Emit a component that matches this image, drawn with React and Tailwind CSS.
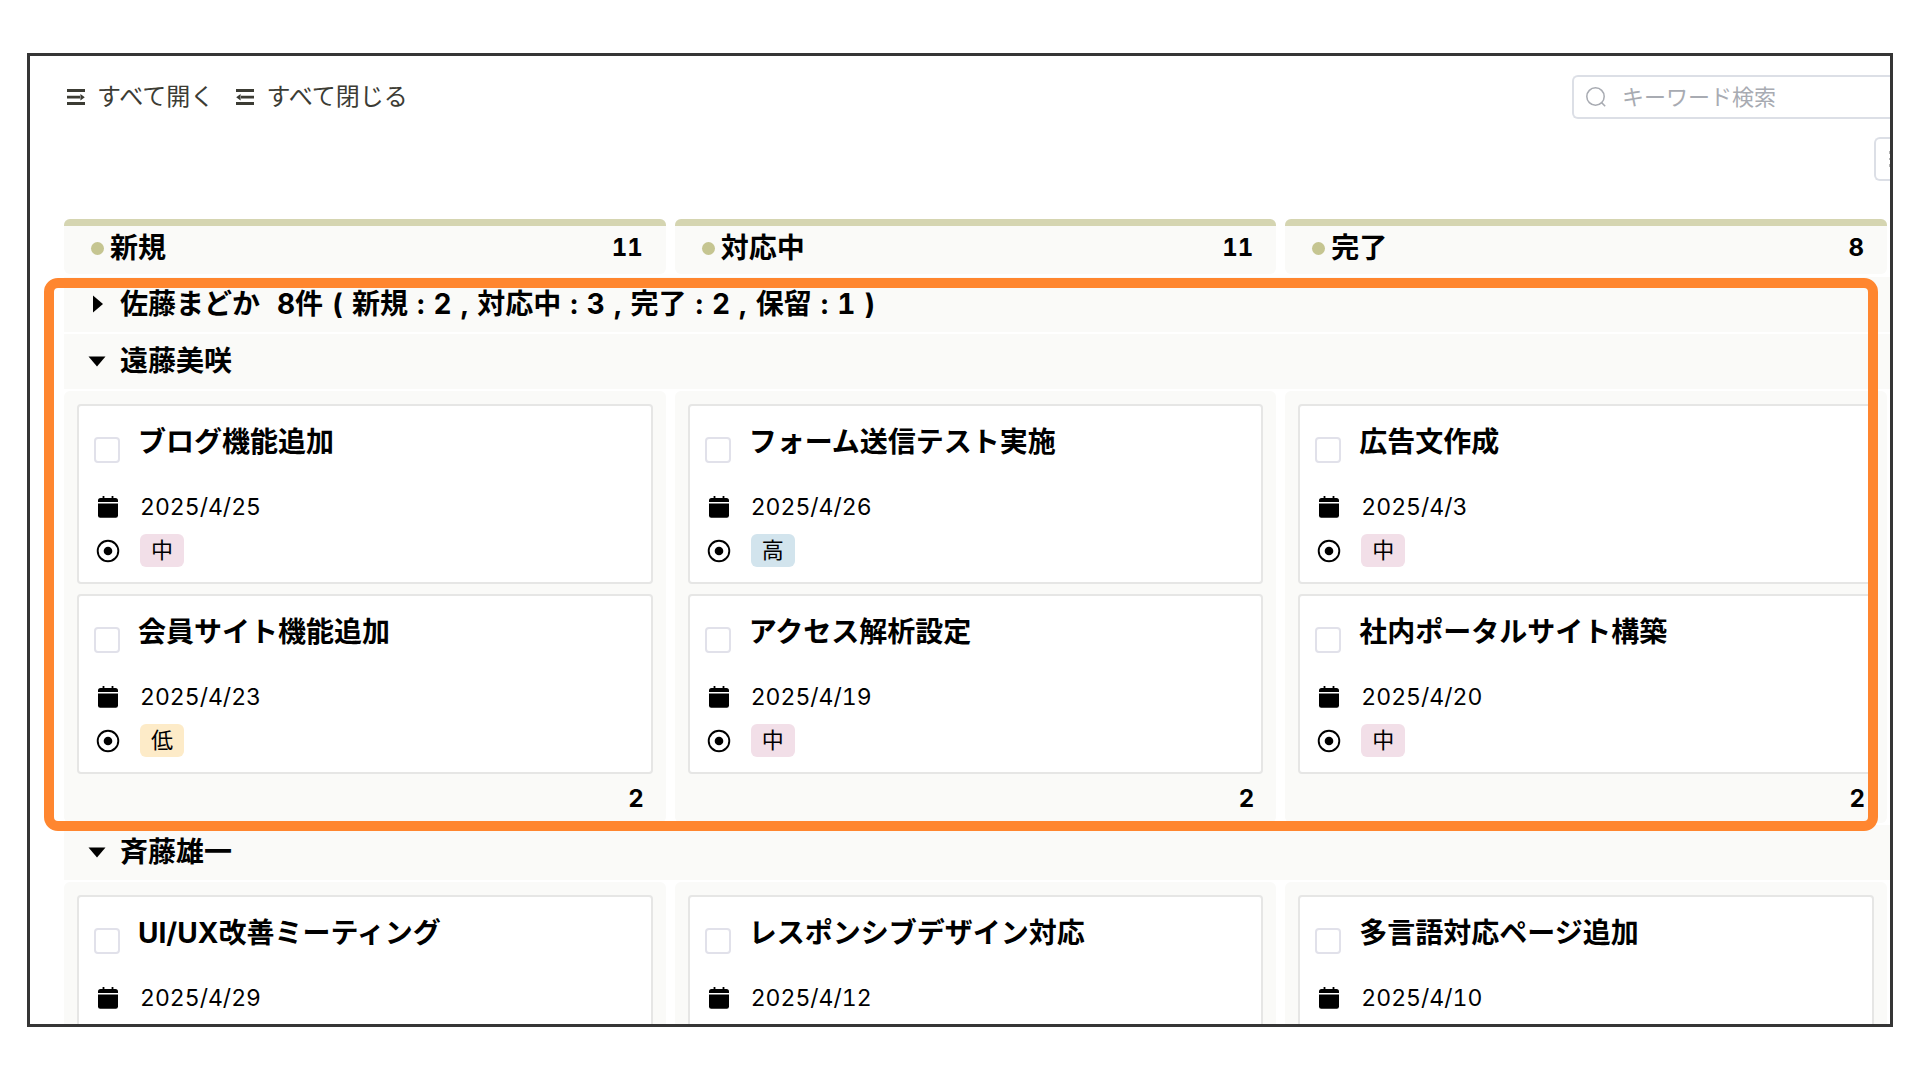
import { useState } from "react";

const columns = [
  { id: "new", name: "新規", total: 11 },
  { id: "doing", name: "対応中", total: 11 },
  { id: "done", name: "完了", total: 8 },
];

const groups = [
  {
    id: "sato",
    name: "佐藤まどか",
    summary: "8件 ( 新規 : 2 , 対応中 : 3 , 完了 : 2 , 保留 : 1 )",
    cards: { new: [], doing: [], done: [] },
  },
  {
    id: "endo",
    name: "遠藤美咲",
    summary: "",
    cards: {
      new: [
        { title: "ブログ機能追加", date: "2025/4/25", priority: "中" },
        { title: "会員サイト機能追加", date: "2025/4/23", priority: "低" },
      ],
      doing: [
        { title: "フォーム送信テスト実施", date: "2025/4/26", priority: "高" },
        { title: "アクセス解析設定", date: "2025/4/19", priority: "中" },
      ],
      done: [
        { title: "広告文作成", date: "2025/4/3", priority: "中" },
        { title: "社内ポータルサイト構築", date: "2025/4/20", priority: "中" },
      ],
    },
  },
  {
    id: "saito",
    name: "斉藤雄一",
    summary: "",
    cards: {
      new: [{ title: "UI/UX改善ミーティング", date: "2025/4/29", priority: "中" }],
      doing: [{ title: "レスポンシブデザイン対応", date: "2025/4/12", priority: "中" }],
      done: [{ title: "多言語対応ページ追加", date: "2025/4/10", priority: "中" }],
    },
  },
];

const priorityColors = {
  高: "bg-[#d2e4ed]",
  中: "bg-[#f2dfe8]",
  低: "bg-[#fdebc8]",
};

function ExpandIcon() {
  return (
    <svg width="18" height="16" viewBox="0 0 18 16" fill="currentColor" aria-hidden="true">
      <path d="M0 0h18v3H0zM0 6.8h13v2.8H0zM0 13h18v3H0zM13.4 5l4.4 3.2-4.4 3.2z" />
    </svg>
  );
}

function CollapseIcon() {
  return (
    <svg width="18" height="16" viewBox="0 0 18 16" fill="currentColor" aria-hidden="true">
      <path d="M0 0h18v3H0zM5 6.8h13v2.8H5zM0 13h18v3H0zM4.6 5L.2 8.2l4.4 3.2z" />
    </svg>
  );
}

function SearchIcon() {
  return (
    <svg width="20" height="20" viewBox="0 0 20 20" fill="none" stroke="currentColor" strokeWidth="1.5" aria-hidden="true">
      <circle cx="9.5" cy="9.5" r="8.7" />
      <path d="M15.6 15.6l3.6 3.6" />
    </svg>
  );
}

function CalendarIcon() {
  return (
    <svg width="20" height="22" viewBox="0 0 20 22" fill="currentColor" aria-hidden="true">
      <path d="M4.6 0h1.8v2h7.2V0h1.8v2h2.1A2.5 2.5 0 0 1 20 4.5V6H0V4.5A2.5 2.5 0 0 1 2.5 2h2.1z" />
      <path d="M0 7.6h20v12a2.2 2.2 0 0 1-2.2 2.2H2.2A2.2 2.2 0 0 1 0 19.6z" />
    </svg>
  );
}

function PriorityIcon() {
  return (
    <svg width="24" height="24" viewBox="0 0 24 24" aria-hidden="true">
      <circle cx="12" cy="12" r="10.3" fill="none" stroke="currentColor" strokeWidth="1.9" />
      <circle cx="12" cy="12" r="4.3" fill="currentColor" />
    </svg>
  );
}

function Caret({ open }) {
  return (
    <svg width="18" height="18" viewBox="0 0 18 18" fill="currentColor" aria-hidden="true">
      {open ? <path d="M.5 4.5h17L9 14.5z" /> : <path d="M5 .5v17L15 9z" />}
    </svg>
  );
}

function Card({ id, card }) {
  return (
    <article className="rounded border-2 border-[#e6e6e5] bg-white p-[15px]">
      <div className="flex h-[42px] items-end gap-[18px]">
        <input
          id={id}
          type="checkbox"
          className="size-[26px] shrink-0 appearance-none rounded border-2 border-[#e1e1ea] bg-white checked:bg-[#c5c591]"
        />
        <label htmlFor={id} className="text-[28px] leading-[42px] font-bold whitespace-nowrap">
          {card.title}
        </label>
      </div>
      <div className="mt-6 flex h-10 items-center gap-[18px]">
        <span className="flex w-7 justify-center">
          <CalendarIcon />
        </span>
        <time className="text-[23px]">{card.date}</time>
      </div>
      <div className="mt-[7px] flex items-center gap-[18px]">
        <span className="flex w-7 justify-center">
          <PriorityIcon />
        </span>
        <span className={`rounded-md px-[11px] text-[22px] leading-[33px] ${priorityColors[card.priority]}`}>
          {card.priority}
        </span>
      </div>
    </article>
  );
}

function Group({ group, open, onToggle }) {
  return (
    <section>
      <h2>
        <button
          type="button"
          aria-expanded={open}
          onClick={onToggle}
          className="mb-[2px] flex h-[55px] w-full items-center gap-[14px] bg-[#fafaf8] pb-[2px] pl-6 text-left text-[28px] leading-10 font-bold whitespace-nowrap"
        >
          <Caret open={open} />
          <span>{group.name}</span>
          {!open && (
            <span className="flex gap-[9px] pl-[3px]">
              {group.summary.split(" ").map((part, i) => (
                <span key={i}>{part}</span>
              ))}
            </span>
          )}
        </button>
      </h2>
      {open && (
        <div className="mb-[2px] grid grid-cols-3 gap-[9px] pr-[3px]">
          {columns.map((column) => (
            <div key={column.id} className="rounded-md bg-[#fafaf8] px-[13px] pt-[13px]">
              <div className="flex flex-col gap-[10px]">
                {group.cards[column.id].map((card, i) => (
                  <Card key={card.title} id={`${group.id}-${column.id}-${i}`} card={card} />
                ))}
              </div>
              <p className="pr-[9px] text-right text-2xl leading-[49px] font-bold">
                {group.cards[column.id].length}
              </p>
            </div>
          ))}
        </div>
      )}
    </section>
  );
}

export default function App() {
  const [opened, setOpened] = useState(["endo", "saito"]);

  function toggle(id) {
    setOpened((prev) => (prev.includes(id) ? prev.filter((x) => x !== id) : [...prev, id]));
  }

  const renderGroup = (group) => (
    <Group key={group.id} group={group} open={opened.includes(group.id)} onToggle={() => toggle(group.id)} />
  );

  return (
    <div className="h-screen bg-white px-[27px] py-[53px] font-[Inter,'Noto_Sans_CJK_JP',sans-serif] text-black tabular-nums">
      <main className="h-full overflow-hidden border-3 border-[#353535] pt-[19px] pl-[34px]">
        {/* Toolbar */}
        <header className="flex h-11 items-center justify-between">
          <div className="flex items-center gap-[22px] pl-[3px] text-2xl text-[#3c3c34]">
            <button
              type="button"
              onClick={() => setOpened(groups.map((g) => g.id))}
              className="flex items-center gap-3 whitespace-nowrap"
            >
              <ExpandIcon />
              すべて開く
            </button>
            <button
              type="button"
              onClick={() => setOpened([])}
              className="flex items-center gap-3 whitespace-nowrap"
            >
              <CollapseIcon />
              すべて閉じる
            </button>
          </div>
          <label className="flex h-11 w-[318px] items-center gap-4 rounded-l-md border-2 border-r-0 border-[#dcdfe6] pl-3 text-[#a8abb2]">
            <SearchIcon />
            <input
              type="text"
              aria-label="キーワード検索"
              placeholder="キーワード検索"
              className="min-w-0 flex-1 text-[22px] outline-none placeholder:text-[#a8abb2]"
            />
          </label>
        </header>
        <div className="mt-[18px] mb-[38px] flex justify-end">
          <button
            type="button"
            aria-label="表示設定"
            className="flex h-11 w-4 items-center justify-end rounded-l-md border-2 border-r-0 border-[#dcdfe6]"
          >
            <svg width="1" height="16" viewBox="0 0 1 16" fill="#b5b5b5" aria-hidden="true">
              <path d="M0 0h1v3H0zM0 7h1v2H0zM0 13h1v3H0z" />
            </svg>
          </button>
        </div>

        {/* Column headings */}
        <div className="mb-[3px] grid grid-cols-3 gap-[9px] pr-[3px]">
          {columns.map((column) => (
            <div key={column.id} className="overflow-hidden rounded-md bg-[#fafaf8]">
              <div className="h-[7px] bg-[#d5d5b1]" />
              <div className="flex h-12 items-start justify-between pr-[23px] pl-[27px] font-bold">
                <div className="flex items-center gap-[6px] text-[28px] leading-11">
                  <span className="size-[13px] rounded-full bg-[#c5c591]" />
                  {column.name}
                </div>
                <span className="text-2xl leading-11">{column.total}</span>
              </div>
            </div>
          ))}
        </div>

        {/* Highlighted groups */}
        <div className="relative">
          {groups.slice(0, 2).map(renderGroup)}
          <div className="pointer-events-none absolute top-px right-3 -bottom-2 -left-5 rounded-[14px] border-10 border-[#ff862f]" />
        </div>
        {groups.slice(2).map(renderGroup)}
      </main>
    </div>
  );
}
